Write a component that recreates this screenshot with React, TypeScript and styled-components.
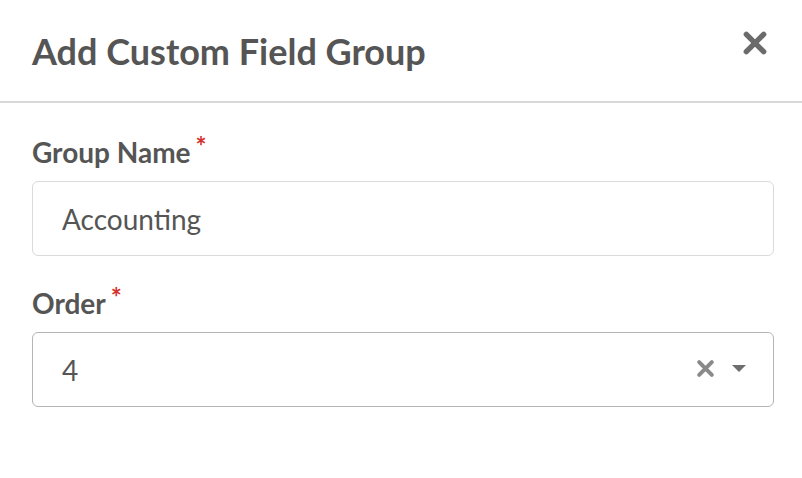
import styled, { createGlobalStyle } from 'styled-components';

const GlobalStyle = createGlobalStyle`
  html, body {
    margin: 0;
    padding: 0;
    background: #ffffff;
  }
  body {
    font-family: Lato, "Open Sans", sans-serif;
    color: #555555;
  }
`;

const Modal = styled.div`
  width: 802px;
  height: 478px;
  background: #ffffff;
  display: flex;
  flex-direction: column;
`;

const Header = styled.div`
  height: 103px;
  display: flex;
  align-items: center;
  justify-content: space-between;
  padding: 0 34px 0 32px;
  border-bottom: 2px solid #d8d8d8;
  box-sizing: border-box;
`;

const Title = styled.h2`
  margin: 0;
  font-size: 36px;
  font-weight: 700;
  color: #555555;
`;

const CloseButton = styled.button`
  border: none;
  background: none;
  padding: 0;
  width: 26px;
  height: 26px;
  cursor: pointer;
  display: flex;
  align-items: center;
  justify-content: center;
  margin-top: -16px;
`;

const Body = styled.div`
  display: flex;
  flex-direction: column;
  gap: 30px;
  padding: 32px 28px 0 32px;
`;

const Field = styled.div`
  display: flex;
  flex-direction: column;
  gap: 12px;
`;

const Label = styled.label`
  font-size: 28px;
  font-weight: 700;
  color: #555555;
  display: flex;
  align-items: flex-start;
`;

const Required = styled.span`
  color: #d3302c;
  font-size: 26px;
  margin-left: 5px;
  line-height: 1;
  margin-top: -2px;
`;

const Box = styled.div<{ $strong?: boolean }>`
  height: 75px;
  box-sizing: border-box;
  border: 1.5px solid ${({ $strong }) => ($strong ? '#b5b5b5' : '#dadada')};
  border-radius: 6px;
  display: flex;
  align-items: center;
  padding: 0 27px 0 29px;
  font-size: 28px;
  color: #555555;
`;

const Value = styled.span`
  flex: 1;
`;

const Controls = styled.div`
  display: flex;
  align-items: center;
  gap: 17px;
  margin-top: -2px;
`;

const Cross = ({ size, color }: { size: number; color: string }) => (
  <svg width={size} height={size} viewBox="0 0 24 24">
    <path d="M4 4 L20 20 M20 4 L4 20" stroke={color} strokeWidth="5" strokeLinecap="round" />
  </svg>
);

const Caret = () => (
  <svg width="14" height="8" viewBox="0 0 14 8">
    <path d="M0 0 L14 0 L7 7 Z" fill="#6e6e6e" />
  </svg>
);

export default function App() {
  return (
    <>
      <GlobalStyle />
      <Modal>
        <Header>
          <Title>Add Custom Field Group</Title>
          <CloseButton aria-label="Close">
            <Cross size={28} color="#6b6b6b" />
          </CloseButton>
        </Header>
        <Body>
          <Field>
            <Label>
              Group Name<Required>*</Required>
            </Label>
            <Box>
              <Value>Accounting</Value>
            </Box>
          </Field>
          <Field>
            <Label>
              Order<Required>*</Required>
            </Label>
            <Box $strong>
              <Value>4</Value>
              <Controls>
                <Cross size={19} color="#8a8a8a" />
                <Caret />
              </Controls>
            </Box>
          </Field>
        </Body>
      </Modal>
    </>
  );
}
